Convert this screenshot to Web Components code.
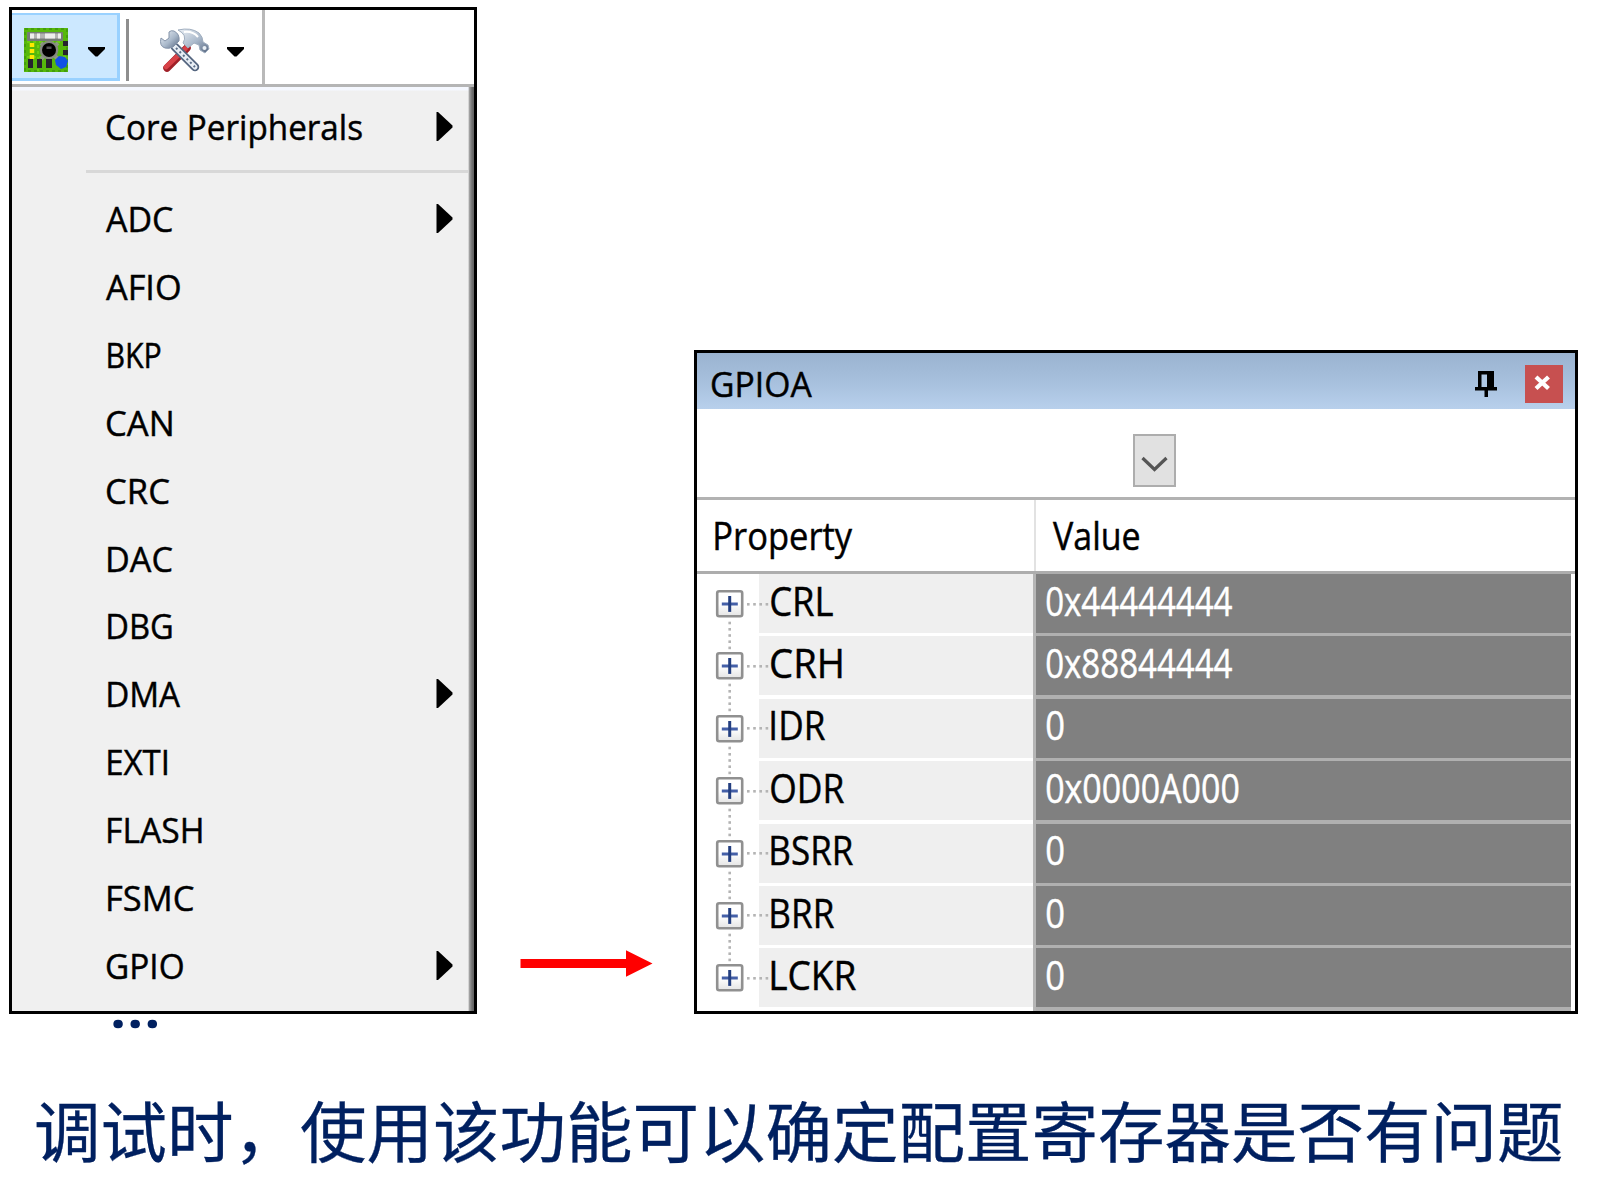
<!DOCTYPE html>
<html lang="zh-CN">
<head>
<meta charset="utf-8">
<title>GPIO peripherals</title>
<style>
html,body{margin:0;background:#fff;overflow:hidden}
body{width:1607px;height:1192px}
</style>
</head>
<body>
<slide-page></slide-page>
<script>
const ctx = document.createElement('canvas').getContext('2d');
function define(name, html, setup) {
  customElements.define(name, class extends HTMLElement {
    constructor() {
      super();
      this.attachShadow({mode: 'open'});
    }
    connectedCallback() {
      this.shadowRoot.innerHTML = typeof html === 'function' ? html(this) : html;
      if (setup) setup(this);
    }
  });
}

/* A label whose glyphs span exactly `w` pixels from its left edge. */
define('ui-label', `<style>
:host{display:block;white-space:pre;width:0}
span{display:inline-block;transform-origin:0 50%;-webkit-text-stroke:var(--heft,.45px) currentColor}
</style><span></span>`, el => {
  const s = el.shadowRoot.querySelector('span');
  const size = +el.getAttribute('size'), w = +el.getAttribute('w');
  const fam = el.getAttribute('family') || '"Open Sans"';
  s.textContent = el.getAttribute('text');
  s.style.fontFamily = fam + ',sans-serif';
  s.style.fontSize = size + 'px';
  ctx.font = size + 'px ' + fam + ',sans-serif';
  const m = ctx.measureText(s.textContent);
  const k = w / (m.actualBoundingBoxRight + m.actualBoundingBoxLeft);
  s.style.transform = `translateX(${m.actualBoundingBoxLeft * k}px) scaleX(${k})`;
});

define('drop-arrow', `<style>:host{display:block;width:17px;height:10px}svg{display:block}</style>
<svg width="17" height="10"><path d="M0 0H17V2L9.5 9.6H7.5L0 2Z" fill="#000"/></svg>`);

define('chip-icon', `<style>:host{display:block}svg{display:block}</style>
<svg width="44" height="44" viewBox="0 0 44 44">
<rect width="44" height="44" fill="#56b80c"/>
<rect x="1" y="1" width="42" height="42" fill="none" stroke="#439e0c" stroke-width="2" stroke-dasharray="3 3"/>
<path d="M3 14H41M14 17V43M3 29H43" stroke="#74d414" stroke-width="1.5" stroke-dasharray="3 3"/>
<rect x="3" y="4" width="36" height="9" rx="1" fill="#777c78"/>
<path d="M6 8H37" stroke="#b4b4b4" stroke-width="5"/>
<path d="M6 8H37" stroke="#eee" stroke-width="5" stroke-dasharray="4 3 3 5 10 3"/>
<path d="M8 15V33" stroke="#ffe900" stroke-width="4.500" stroke-dasharray="4 2"/>
<path d="M17 15L34 31M34 15L17 31" stroke="#8d9a80" stroke-width="4"/>
<circle cx="25" cy="22" r="9.300" fill="#858a80"/><circle cx="25" cy="22" r="7" fill="#000"/>
<rect x="22.500" y="18.500" width="5" height="2.500" fill="#555"/>
<path d="M39 13H44V18H39ZM39 22H44V27H39ZM4 31H9V40H4ZM13 31H18V40H13ZM22 31H28V40H22Z" fill="#26232f"/>
<path d="M35 28L41 29L44 33L42 39L37 41L32 37L31 32Z" fill="#1250e6"/>
</svg>`);

define('tools-icon', `<style>:host{display:block}svg{display:block}</style>
<svg width="50" height="46" viewBox="0 0 50 46">
<defs><linearGradient id="h" x1="0" y1="0" x2="1" y2="1"><stop offset="0" stop-color="#eef3f8"/><stop offset=".55" stop-color="#a9b8ca"/><stop offset="1" stop-color="#54657f"/></linearGradient></defs>
<path d="M27 20L7 40" stroke="#a02028" stroke-width="7.500" stroke-linecap="round"/>
<path d="M26 20L6 39" stroke="#d84248" stroke-width="4.500" stroke-linecap="round"/>
<path d="M15 19L35 39" stroke="#54657f" stroke-width="8.500" stroke-linecap="round"/>
<path d="M14 18L35 39" stroke="#e8eef5" stroke-width="5" stroke-linecap="round"/>
<path d="M16 20L35 39" stroke="#5d6f89" stroke-width="2" stroke-dasharray="2 3"/>
<path d="M9 4L9 10L5 13L1 10Q-1 18 5 20Q9 21 13 19L19 13Q20 6 14 3Q11 2 9 4Z" fill="url(#h)" stroke="#8594aa" stroke-width="1"/>
<path d="M18 2Q31 -1 39 5Q43 9 43 14L48 17L49 21L45 25L40 22L39 17L34 15L28 20L23 15Q28 7 18 2Z" fill="url(#h)" stroke="#a0aebf" stroke-width="1"/>
<path d="M24 4Q33 3 38 9" stroke="#fff" stroke-width="2" fill="none"/>
<circle cx="44.500" cy="20" r="2" fill="#e9eff5"/>
</svg>`);

define('tool-bar', `<style>
:host{display:flex;height:74px;background:#fff;border-bottom:3px solid #b5b5b5}
.on{box-sizing:border-box;width:108px;height:68px;margin-top:3px;background:#cce8ff;border:solid #99d1ff;border-width:2.500px 3px 3px 0;display:flex;padding:12.500px 0 0 12px}
.on drop-arrow{margin:19px 0 0 20px}
.sep{width:3px;height:62px;margin:9px 0 0 6px;background:#8e8e8e}
tools-icon{margin:18px 0 0 31px}
.t drop-arrow{margin:37px 0 0 17px}
.t{display:flex;box-sizing:border-box;width:135.500px;border-right:3px solid #b9b9b9}
</style>
<div class="on"><chip-icon></chip-icon><drop-arrow></drop-arrow></div>
<div class="sep"></div>
<div class="t"><tools-icon></tools-icon><drop-arrow></drop-arrow></div>`);

define('menu-item', el => `<style>
:host{display:flex;align-items:center;height:67.850px;padding-left:${el.getAttribute('x') - 12 + .9}px;box-sizing:border-box}
svg{display:block;margin-left:${436 - el.getAttribute('x') - .9}px}
</style><ui-label size="35" w="${el.getAttribute('w') - 1.6}" text="${el.getAttribute('text')}"></ui-label>
${el.hasAttribute('sub') ? '<svg width="17" height="29"><path d="M0.500 0H2L16.500 13.500V15.500L2 29H0.500Z"/></svg>' : ''}`);

const menu = [['ADC',105,68,1],['AFIO',105,76],['BKP',107,54.5],['CAN',106,66],['CRC',106,63.5],['DAC',107,65.5],['DBG',107,65],['DMA',107,74.5,1],['EXTI',107,61],['FLASH',107,95.5],['FSMC',107,87],['GPIO',106,78,1]];
const item = ([t, x, w, s]) => `<menu-item text="${t}" x="${x}" w="${w}"${s ? ' sub' : ''}></menu-item>`;
define('peripheral-menu', `<style>
:host{display:block;box-sizing:border-box;width:468px;height:1007px;border:3px solid #000;background:#f0f0f0}
.body{box-sizing:border-box;height:924px;padding-top:5.500px;
background:linear-gradient(90deg,transparent 456px,#a0a0a0 457.500px,#707070 460px,#606060 462px),linear-gradient(#f5f8ff 3px,#f0f0f0 4px)}
hr{border:0;margin:9.650px 6px 12px 74px;height:3px;background:#d8d8d8}
</style>
<tool-bar></tool-bar>
<div class="body">${item(['Core Peripherals',106,257,1])}<hr>${menu.map(item).join('')}</div>`);

define('red-arrow', `<style>:host{display:block}svg{display:block}</style>
<svg width="133" height="27"><path d="M0.500 9H106V0.300L132.500 13.500L106 26.700V18H0.500Z" fill="#f00"/></svg>`);

define('register-row', el => `<style>
:host{display:flex;height:62.400px}
.tree{width:62px}
svg{display:block;overflow:visible}
.n,.v{box-sizing:border-box;height:59px;display:flex;align-items:center;padding-bottom:5.800px}
.n{width:274px;background:#efefef;padding-left:${el.getAttribute('x') - 759}px;position:relative}
.val{border-left:3.500px solid #b5b5b5;background:#b0b0b0}
.v{width:535px;background:#808080;color:#fff;padding-left:9.500px}
</style>
<div class="tree"><svg width="62" height="59">
<defs><linearGradient id="g" x2="0" y2="1"><stop offset=".5" stop-color="#fff"/><stop offset="1" stop-color="#e4e4e4"/></linearGradient></defs>
<rect x="20.200" y="17.300" width="25" height="25" rx="2" fill="url(#g)" stroke="#909090" stroke-width="2.600"/>
<path d="M24.800 30H40.800" stroke="#4560a8" stroke-width="3"/><path d="M32.700 22V37.900" stroke="#243f80" stroke-width="3"/>
${el.hasAttribute('last') ? '' : [48.7,55,61.2,67.4,73.6].map(y => `<rect x="31.400" y="${y - 1}" width="2.600" height="2.600" fill="#b4b4b4"/>`).join('')}
</svg></div>
<div class="n"><ui-label size="39.5" w="${el.getAttribute('w')}" text="${el.getAttribute('text')}"></ui-label>
<svg style="position:absolute;left:-13px;top:28.500px" width="24" height="3">${[0,6.2,12.4,18.6].map(x => `<rect x="${x + 1}" width="2.600" height="2.600" fill="#b4b4b4"/>`).join('')}</svg></div>
<div class="val"><div class="v"><ui-label size="39.5" w="${el.getAttribute('vw')}" text="${el.getAttribute('value')}"></ui-label></div></div>`);

const regs = [['CRL',771,62,'0x44444444',186],['CRH',771,71,'0x88844444',186],['IDR',771,54,'0',17.5],['ODR',771,73,'0x0000A000',192.5],['BSRR',771,82,'0',17.5],['BRR',771,63,'0',17.5],['LCKR',771,85,'0',17.5]];
define('register-window', `<style>
:host{display:block;box-sizing:border-box;width:884px;height:664px;border:3px solid #000;background:#fff;overflow:hidden}
.title{display:flex;box-sizing:border-box;height:56px;background:linear-gradient(#9ab3d0,#a8c1de 55%,#b8d0ec);padding-left:15px}
.title ui-label{align-self:center;padding-top:4px}
.pin{margin:18px 0 0 763px}
.x{margin:12px 0 0 28px;width:37.500px;height:37.500px;background:#c75050}
svg{display:block}
.combo{box-sizing:border-box;height:90.500px;padding:25px 0 0 436px;border-bottom:3.500px solid #b2b2b2}
.btn{box-sizing:border-box;width:43px;height:53px;border:2.600px solid #adadad;background:#e1e1e1}
.head{display:flex;box-sizing:border-box;height:74.500px;border-bottom:3.500px solid #adadad;align-items:stretch}
.head div{display:flex;align-items:center;box-sizing:border-box;padding-bottom:1px}
.p{width:339px;padding-left:18px;border-right:2.500px solid #e2e2e2}
.q{padding-left:17px}
</style>
<div class="title"><ui-label size="35" w="100.5" text="GPIOA"></ui-label>
<svg class="pin" width="22" height="27"><path d="M3 0H19V16H22V19.500H13V26H9.500V19.500H0V16H3Z"/><path d="M6.500 3.500H12V16H6.500Z" fill="#b0c8e4"/></svg>
<div class="x"><svg width="38" height="38"><path d="M11 12L23.500 23.500M23.500 12L11 23.500" stroke="#fff" stroke-width="4.300"/></svg></div></div>
<div class="combo"><div class="btn"><svg width="38" height="48"><path d="M7.500 22L19.500 33.500L31.500 22" fill="none" stroke="#555" stroke-width="3.200"/></svg></div></div>
<div class="head"><div class="p"><ui-label size="39" w="137.5" text="Property"></ui-label></div><div class="q"><ui-label size="39" w="86" text="Value"></ui-label></div></div>
${regs.map(([t, x, w, v, vw], i) => `<register-row text="${t}" x="${x}" w="${w}" value="${v}" vw="${vw}"${i === 6 ? ' last' : ''}></register-row>`).join('')}`);

define('slide-page', `<style>
:host{display:block;color:#000}
.top{display:flex;padding:7px 0 0 9px;height:1007px}
red-arrow{margin:943px 41px 0 43px}
register-window{margin-top:343px}
.foot{color:#002060;padding-top:1px}
.dots{--heft:2.400px;display:flex;align-items:center;height:12px;padding-left:114px}
.cap{--heft:.3px;display:flex;align-items:center;height:100px;padding-left:36px;margin-top:51px}
</style>
<div class="top"><peripheral-menu></peripheral-menu><red-arrow></red-arrow><register-window></register-window></div>
<div class="foot"><div class="dots"><ui-label size="46" w="42.5" family='"Noto Sans CJK SC"' text="…"></ui-label></div>
<div class="cap"><ui-label size="66" w="1525.5" family='"Noto Sans CJK SC"' text="调试时，使用该功能可以确定配置寄存器是否有问题"></ui-label></div></div>`);
</script>
</body>
</html>
